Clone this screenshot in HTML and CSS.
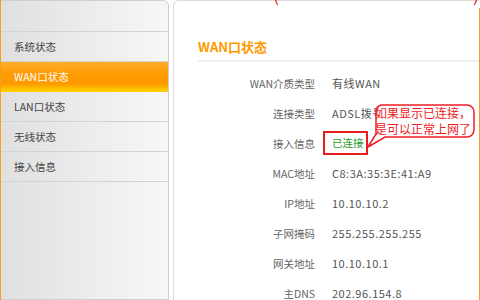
FILE: index.html
```html
<!DOCTYPE html>
<html lang="zh-CN">
<head>
    <meta charset="UTF-8">
    <title>WAN口状态</title>
    <link rel="stylesheet" href="styles.css">
</head>
<body>
    <div class="page">
        <div class="top-note"><span>(</span><span>)</span></div>
        <!-- 左侧菜单 -->
        <div class="sidebar">
            <div class="side-head"></div>
            <ul class="menu">
                <li>系统状态</li>
                <li class="active">WAN口状态</li>
                <li>LAN口状态</li>
                <li>无线状态</li>
                <li>接入信息</li>
            </ul>
        </div>
        <!-- 右侧内容 -->
        <div class="main">
            <div class="title">WAN口状态</div>
            <table class="info">
                <tr><td class="label">WAN介质类型</td><td class="value">有线WAN</td></tr>
                <tr><td class="label">连接类型</td><td class="value">ADSL拨号</td></tr>
                <tr><td class="label">接入信息</td><td class="value"><span class="ok-box">已连接</span></td></tr>
                <tr><td class="label">MAC地址</td><td class="value">C8:3A:35:3E:41:A9</td></tr>
                <tr><td class="label">IP地址</td><td class="value">10.10.10.2</td></tr>
                <tr><td class="label">子网掩码</td><td class="value">255.255.255.255</td></tr>
                <tr><td class="label">网关地址</td><td class="value">10.10.10.1</td></tr>
                <tr><td class="label">主DNS</td><td class="value">202.96.154.8</td></tr>
            </table>
        </div>
        <!-- 提示气泡 -->
        <div class="callout">
            <svg class="bubble" width="112" height="48" viewBox="0 0 112 48">
                <path d="M16,3 H102 A7,7 0 0 1 109,10 V28 A7,7 0 0 1 102,35 H20 L3,45 L11,32 V10 A7,7 0 0 1 16,3 Z" fill="#fff" stroke="#ee1c25" stroke-width="1.5"/>
            </svg>
            <div class="bubble-text">如果显示已连接，<br>是可以正常上网了</div>
        </div>
    </div>
</body>
</html>
```

FILE: styles.css
```css
body {
    margin: 0;
    width: 480px;
    height: 300px;
    overflow: hidden;
    background: #fff;
    font-family: "Noto Sans CJK SC", sans-serif;
}
.page {
    position: relative;
    display: flex;
    height: 300px;
    border-left: 1px solid #f5a21b;
}
.page::after {
    content: "";
    position: absolute;
    right: 0;
    top: 8px;
    bottom: 0;
    width: 1px;
    background: #f0a030;
}
.top-note {
    position: absolute;
    left: 272px;
    top: -15px;
    width: 206px;
    display: flex;
    justify-content: space-between;
    color: #ee1c25;
    font-size: 18px;
    line-height: 18px;
}
.sidebar {
    width: 168px;
    box-sizing: border-box;
    border: 1px solid #cfcfcf;
    border-left: none;
    border-top-right-radius: 6px;
    background: linear-gradient(90deg, #e0e0e0 0%, #f7f7f7 100%);
}
.side-head {
    height: 30px;
    border-bottom: 1px solid #d3d3d3;
}
.menu {
    list-style: none;
    margin: 0;
    padding: 0;
}
.menu li {
    height: 29px;
    line-height: 29px;
    padding-left: 13px;
    border-bottom: 1px solid #d3d3d3;
    font-size: 10.5px;
    color: #444;
}
.menu li.active {
    color: #fff;
    background: linear-gradient(180deg, #ffae2a 0%, #ff9a00 45%, #ff9900 75%, #ffd200 100%);
    border-bottom-color: #ffcc00;
}
.main {
    flex: 1;
    margin-left: 4px;
    margin-right: 1px;
    border: 1px solid #dcdcdc;
    border-right: none;
    border-bottom: none;
    border-top-left-radius: 6px;
    background: #fff;
}
.title {
    margin-left: 24px;
    padding-top: 37px;
    padding-bottom: 4px;
    border-bottom: 2px solid #efefef;
    color: #ff9900;
    font-size: 13px;
    font-weight: bold;
    line-height: 18px;
}
.info {
    border-collapse: collapse;
    margin-top: 6px;
}
.info td {
    height: 30px;
    padding: 0;
}
.label {
    width: 141px;
    text-align: right;
    color: #666;
    font-size: 10.5px;
}
.value {
    padding-left: 17px !important;
    color: #555;
    font-size: 11px;
    letter-spacing: 0.5px;
}
.ok-box {
    display: inline-block;
    margin-left: -9px;
    padding: 2px 2px 2px 7px;
    border: 2px solid #e81c1c;
    color: #2b9a2b;
    font-size: 10.5px;
    letter-spacing: 0;
    line-height: 16px;
}
.callout {
    position: absolute;
    left: 364px;
    top: 102px;
    width: 112px;
    height: 48px;
}
.bubble {
    position: absolute;
    left: 0;
    top: 0;
}
.bubble-text {
    position: absolute;
    left: 10px;
    top: 3px;
    color: #ee1c25;
    font-size: 12px;
    line-height: 16px;
    white-space: nowrap;
}
```
